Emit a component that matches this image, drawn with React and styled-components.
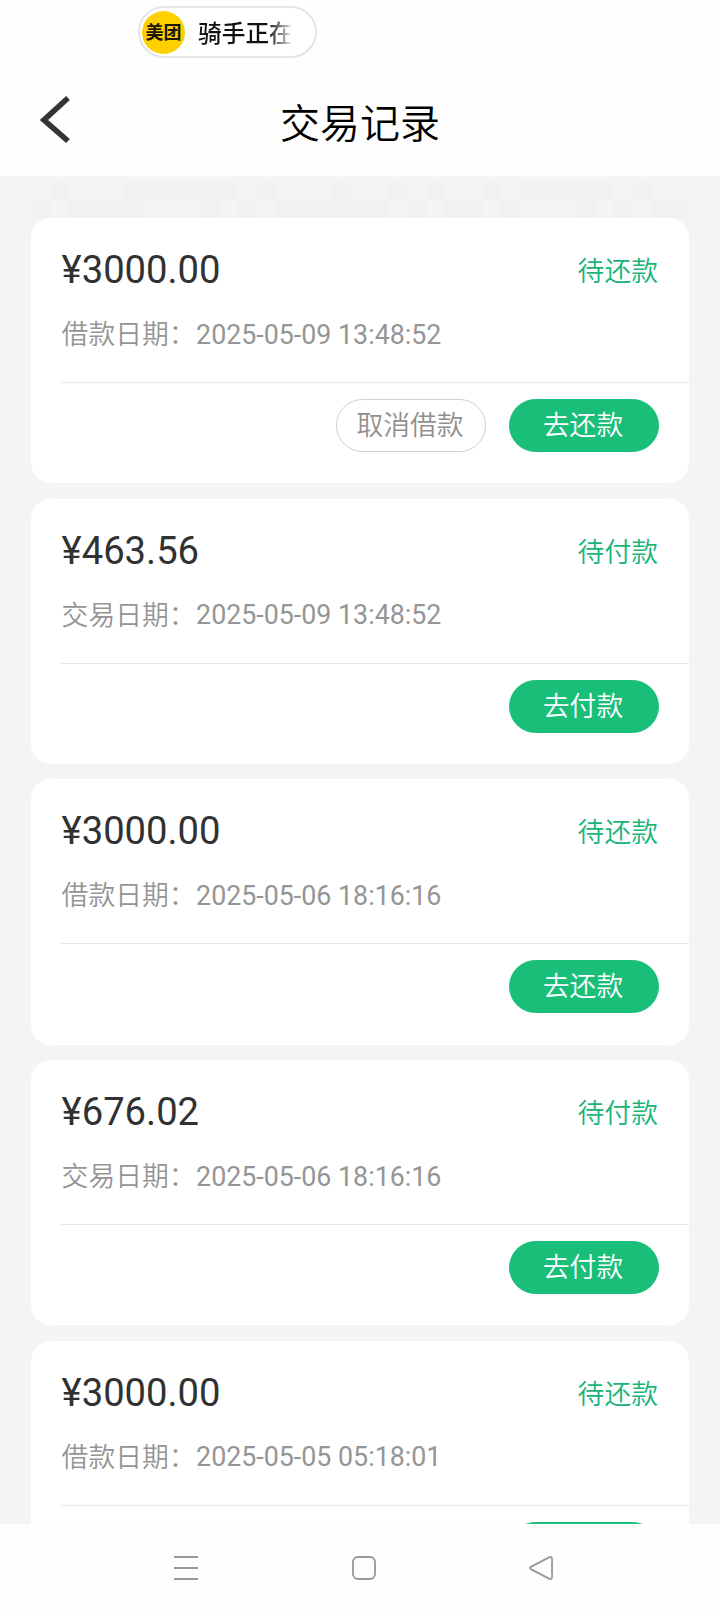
import React from 'react';
import styled, { createGlobalStyle } from 'styled-components';

const GlobalStyle = createGlobalStyle`
  * { box-sizing: border-box; }
  body {
    margin: 0;
    background: #fefefe;
    font-family: Roboto, 'Noto Sans CJK SC', sans-serif;
  }
`;

const Screen = styled.div`
  display: flex;
  flex-direction: column;
  width: 720px;
  height: 1612px;
  overflow: hidden;
  background: #fefefe;
`;

const StatusBar = styled.div`
  flex: none;
  height: 64px;
  padding: 6px 0 0 138px;
`;

const LivePill = styled.div`
  display: flex;
  align-items: center;
  width: 179px;
  height: 52px;
  padding-left: 2px;
  border: 2px solid #e3e4ec;
  border-radius: 26px;
  background: #fff;
`;

const Badge = styled.div`
  flex: none;
  display: flex;
  align-items: center;
  justify-content: center;
  width: 43px;
  height: 43px;
  padding-bottom: 2px;
  border-radius: 50%;
  background: #ffd000;
  color: #1b1605;
  font: 700 18px/24px 'Noto Sans CJK SC', sans-serif;
`;

const PillText = styled.div`
  margin: 0 0 1px 13px;
  width: 96px;
  overflow: hidden;
  white-space: nowrap;
  font: 500 23.7px/36px 'Noto Sans CJK SC', sans-serif;
  color: transparent;
  background: linear-gradient(90deg, #111 72%, #aaa 91%, #fff 98%);
  -webkit-background-clip: text;
  background-clip: text;
`;

const Header = styled.header`
  flex: none;
  display: grid;
  grid-template-columns: 110px 1fr 110px;
  align-items: center;
  height: 112px;
`;

const BackIcon = styled.svg`
  width: 32px;
  height: 50px;
  margin: 0 0 0 40px;
`;

const Title = styled.h1`
  margin: 10px 0 0;
  text-align: center;
  font-size: 40px;
  font-weight: 350;
  line-height: 56px;
  color: #000;
`;

const Content = styled.main`
  flex: none;
  height: 1348px;
  padding: 6px 31px 0;
  overflow: hidden;
  background: #f4f4f4;
`;

const PatternRow = styled.div`
  display: grid;
  grid-template-columns: repeat(35, 1fr);
  height: 18px;
`;

const PatternCell = styled.span`
  background: ${({ $filled }) => ($filled ? '#f1f1f1' : '#f4f4f4')};
`;

const CardList = styled.div`
  display: flex;
  flex-direction: column;
  gap: 15.4px;
`;

const Card = styled.section`
  flex: none;
  height: 265.3px;
  border-radius: 20px;
  background: #fff;
`;

const Details = styled.div`
  height: 165px;
  margin-left: 30px;
  padding: 0 31px 0 0.6px;
  border-bottom: 1px solid #e9e9e9;
`;

const Summary = styled.div`
  display: flex;
  align-items: center;
  justify-content: space-between;
  padding-top: 24px;
  height: 80px;
`;

const Amount = styled.div`
  font-size: 38.2px;
  line-height: 56px;
  color: #303133;
`;

const Status = styled.div`
  padding-top: 4px;
  font-size: 26.8px;
  line-height: 40px;
  font-weight: 350;
  color: #18b478;
`;

const DateLine = styled.div`
  display: flex;
  align-items: center;
  margin-top: 16px;
  font-size: 26.8px;
  line-height: 40px;
  color: #959595;
`;

const DateLabel = styled.span`
  width: 134.5px;
  padding-top: 1px;
  font-weight: 350;
`;

const Actions = styled.div`
  display: flex;
  justify-content: flex-end;
  gap: 23px;
  padding: 16px 30.5px 0 0;
`;

const Button = styled.button`
  width: 150px;
  height: 53px;
  padding: 1px 1px 0 0;
  border: 1px solid ${({ $primary }) => ($primary ? '#19be79' : '#cfcfcf')};
  border-radius: 27px;
  background: ${({ $primary }) => ($primary ? '#19be79' : '#fff')};
  color: ${({ $primary }) => ($primary ? '#fff' : '#909090')};
  font-family: inherit;
  font-size: 26.8px;
  font-weight: 350;
  line-height: 50px;
`;

const SystemNav = styled.nav`
  flex: none;
  display: flex;
  align-items: center;
  justify-content: space-between;
  height: 88px;
  padding: 0 166px 0 173px;
  background: #fefefe;
`;

const NavIcon = styled.svg`
  width: 26px;
  height: 26px;
  fill: none;
  stroke: #989898;
  stroke-width: 1.8;
`;

const filledRows = [
  [1, 5, 6, 7, 8, 9, 10, 12, 16, 19, 21, 24, 26, 27, 28, 29, 30, 32],
  [0, 2, 3, 4, 5, 9, 11, 13, 14, 15, 16, 17, 18, 20, 22, 23, 25, 29, 31, 33, 34],
];

const records = [
  { amount: '3000.00', loan: true, time: '2025-05-09 13:48:52', cancellable: true },
  { amount: '463.56', loan: false, time: '2025-05-09 13:48:52' },
  { amount: '3000.00', loan: true, time: '2025-05-06 18:16:16' },
  { amount: '676.02', loan: false, time: '2025-05-06 18:16:16' },
  { amount: '3000.00', loan: true, time: '2025-05-05 05:18:01' },
];

function RecordCard({ record }) {
  const { amount, loan, time, cancellable } = record;
  return (
    <Card>
      <Details>
        <Summary>
          <Amount>¥{amount}</Amount>
          <Status>{loan ? '待还款' : '待付款'}</Status>
        </Summary>
        <DateLine>
          <DateLabel>{loan ? '借款日期：' : '交易日期：'}</DateLabel>
          <span>{time}</span>
        </DateLine>
      </Details>
      <Actions>
        {cancellable && <Button>取消借款</Button>}
        <Button $primary>{loan ? '去还款' : '去付款'}</Button>
      </Actions>
    </Card>
  );
}

export default function App() {
  return (
    <Screen>
      <GlobalStyle />
      <StatusBar>
        <LivePill>
          <Badge>美团</Badge>
          <PillText>骑手正在</PillText>
        </LivePill>
      </StatusBar>
      <Header>
        <BackIcon viewBox="0 0 32 50">
          <path d="M28 3 L4 25 L28 46" fill="none" stroke="#333436" strokeWidth="5.6" />
        </BackIcon>
        <Title>交易记录</Title>
      </Header>
      <Content>
        {filledRows.map((filled, row) => (
          <PatternRow key={row}>
            {Array.from({ length: 35 }, (_, i) => (
              <PatternCell key={i} $filled={filled.includes(i)} />
            ))}
          </PatternRow>
        ))}
        <CardList>
          {records.map((record, i) => (
            <RecordCard key={i} record={record} />
          ))}
        </CardList>
      </Content>
      <SystemNav>
        <NavIcon viewBox="0 0 26 26">
          <path d="M1 2H25M1 13H25M1 24H25" />
        </NavIcon>
        <NavIcon viewBox="0 0 26 26">
          <rect x="2" y="2" width="22" height="22" rx="5" />
        </NavIcon>
        <NavIcon viewBox="0 0 26 26">
          <path d="M3.2 11.6 L21.5 2.2 Q24 1.3 24 4 V22 Q24 24.7 21.5 23.8 L3.2 14.4 Q0.8 13 3.2 11.6 Z" />
        </NavIcon>
      </SystemNav>
    </Screen>
  );
}
